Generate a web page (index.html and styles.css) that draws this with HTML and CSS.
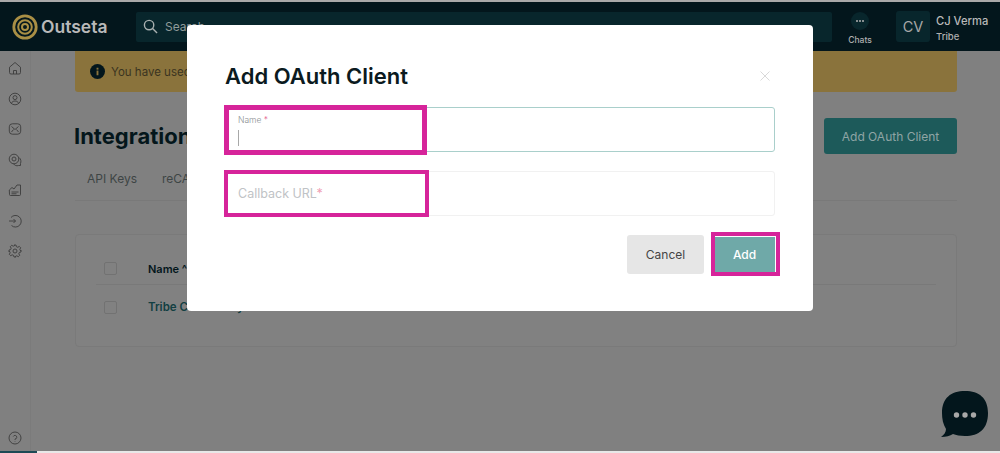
FILE: index.html
```html
<!DOCTYPE html>
<html lang="en">
<head>
<meta charset="utf-8">
<title>Add OAuth Client</title>
<link rel="stylesheet" href="styles.css">
</head>
<body>
<div class="top-edge"></div>
<header class="topbar">
  <div class="brand">
    <svg class="logo" viewBox="0 0 26 26" fill="none" stroke="#a98f45"><circle cx="13" cy="13" r="11.2" stroke-width="2.8"/><circle cx="13" cy="13" r="6.800" stroke-width="2"/><circle cx="13" cy="13" r="3" stroke-width="2"/></svg>
    <span class="brand-name">Outseta</span>
  </div>
  <div class="search">
    <svg class="search-icon" viewBox="0 0 16 16" fill="none" stroke="#a8b0b0" stroke-width="1.5"><circle cx="6.5" cy="6.5" r="5"/><path d="M10.2 10.2 15 15"/></svg>
    <span>Search</span>
  </div>
  <div class="chats">
    <span class="chats-dot"><svg viewBox="0 0 18 18" fill="#b0b0b0"><circle cx="6" cy="9" r="1"/><circle cx="9" cy="9" r="1"/><circle cx="12" cy="9" r="1"/></svg></span>
    <span class="chats-label">Chats</span>
  </div>
  <div class="avatar">CV</div>
  <div class="user">
    <span class="user-name">CJ Verma</span>
    <span class="user-org">Tribe</span>
  </div>
</header>
<div class="body-row">
  <nav class="sidebar">
    <svg class="nav-icon" viewBox="0 0 14 14"><path d="M1.5 6.2 7 1.5l5.5 4.7v5.300a1.500 1.500 0 0 1-1.500 1.500H3a1.500 1.500 0 0 1-1.500-1.500z"/><path d="M5.500 13V9.500h3V13"/></svg>
    <svg class="nav-icon" viewBox="0 0 14 14"><circle cx="7" cy="7" r="5.800"/><circle cx="7" cy="5.600" r="2"/><path d="M3.400 11.200c.8-1.600 2-2.200 3.600-2.200s2.800.6 3.600 2.200"/></svg>
    <svg class="nav-icon" viewBox="0 0 14 14"><rect x="1.300" y="1.800" width="11.400" height="10.400" rx="3"/><path d="m3.500 4.500 3.500 3 3.500-3M3.500 10l2-2.500M10.500 10l-2-2.500"/></svg>
    <svg class="nav-icon" viewBox="0 0 14 14"><circle cx="6" cy="6" r="4.800"/><circle cx="6" cy="6" r="2"/><path d="M11 4.500c2 1.500 2.300 4 1.500 6v2h-2c-2 .8-4-.2-5-1.700"/></svg>
    <svg class="nav-icon" viewBox="0 0 14 14"><path d="M1.300 7 4 4.500l2 1.500 3-4h3.500v9.500a1 1 0 0 1-1 1h-9a1 1 0 0 1-1-1z"/><path d="M3.500 9h7M3.500 10.800h5"/></svg>
    <svg class="nav-icon" viewBox="0 0 14 14"><path d="M3 3.500A5.800 5.800 0 1 1 3.500 11.500"/><path d="M1 7h6.500M5.500 5l2 2-2 2"/></svg>
    <svg class="nav-icon" viewBox="0 0 14 14"><circle cx="7" cy="7" r="2"/><path d="M6 1h2l.4 1.700 1.400.6 1.500-.9 1.400 1.400-.9 1.500.6 1.400L13 6v2l-1.600.4-.6 1.400.9 1.500-1.400 1.400-1.500-.9-1.400.6L8 13H6l-.4-1.600-1.400-.6-1.500.9-1.400-1.400.9-1.500-.6-1.400L1 8V6l1.600-.4.600-1.400-.9-1.500 1.400-1.400 1.500.9 1.400-.6z"/></svg>
    <svg class="nav-icon help" viewBox="0 0 14 14"><circle cx="7" cy="7" r="6"/><path d="M5.300 5.500A1.800 1.800 0 1 1 7 8v.8M7 10.300v.5"/></svg>
  </nav>
  <main class="content">
    <div class="banner">
      <svg class="info" viewBox="0 0 16 16"><circle cx="8" cy="8" r="8" fill="#03161c"/><rect x="7" y="7" width="2" height="5" fill="#8a733c"/><rect x="7" y="4" width="2" height="2" fill="#8a733c"/></svg>
      <span>You have used</span>
    </div>
    <div class="title-row">
      <h1>Integrations</h1>
      <button class="primary">Add OAuth Client</button>
    </div>
    <div class="tabs">
      <span>API Keys</span>
      <span>reCAPTCHA</span>
    </div>
    <section class="card">
      <div class="row head">
        <span class="check"></span>
        <span class="cell-name">Name ^</span>
      </div>
      <div class="row">
        <span class="check"></span>
        <span class="cell-link">Tribe Community</span>
      </div>
    </section>
  </main>
</div>
<div class="bottom-edge"><span class="bottom-teal"></span></div>

<div class="modal">
  <div class="modal-head">
    <h2>Add OAuth Client</h2>
    <svg class="close" viewBox="0 0 10 10" fill="none" stroke="#d9d9d9" stroke-width="1"><path d="m.5.500 9 9M9.500.500l-9 9"/></svg>
  </div>
  <div class="field focused">
    <span class="float-label">Name <em>*</em></span>
    <span class="caret"></span>
  </div>
  <div class="field">
    <span class="placeholder">Callback URL<em class="soft">*</em></span>
  </div>
  <div class="actions">
    <button class="cancel">Cancel</button>
    <button class="add">Add</button>
  </div>
  <div class="mark mark-name"></div>
  <div class="mark mark-url"></div>
  <div class="mark mark-add"></div>
</div>

<div class="chat-bubble">
  <svg viewBox="0 0 47 46"><path d="M24 0c14 0 23 7 23 22 0 16-9 23-23 23-5 0-9-1-12-2-3 2-7 3-12 3 3-2 5-5 5-8C2 33 1 28 1 22 1 7 10 0 24 0z" fill="#03161c"/><circle cx="15.500" cy="24" r="2.700" fill="#a8a8a8"/><circle cx="24" cy="24" r="2.700" fill="#a8a8a8"/><circle cx="32.500" cy="24" r="2.700" fill="#a8a8a8"/></svg>
</div>
</body>
</html>
```

FILE: styles.css
```css
* { box-sizing: border-box; }
html, body { margin: 0; height: 453px; overflow: hidden; }
body {
  width: 1000px;
  position: relative;
  display: flex;
  flex-direction: column;
  background: #808080;
  font-family: Inter, "Liberation Sans", sans-serif;
}
.top-edge { height: 2px; background: #a9a9a9; flex: none; }
.topbar {
  height: 49px;
  flex: none;
  display: flex;
  align-items: center;
  background: #03161c;
}
.brand { width: 136px; flex: none; display: flex; align-items: center; padding-left: 12px; gap: 3px; }
.logo { width: 26px; height: 26px; }
.brand-name { font-size: 17.500px; font-weight: 600; color: #b9b9b9; }
.search {
  width: 696px;
  height: 30px;
  flex: none;
  display: flex;
  align-items: center;
  gap: 7px;
  padding-left: 7px;
  background: #08262c;
  border-radius: 2px;
  font-size: 12px;
  color: #8f9a9a;
}
.search-icon { width: 15px; height: 15px; }
.chats { width: 56px; margin-right: 8px; padding-top: 4px; flex: none; display: flex; flex-direction: column; align-items: center; gap: 5px; }
.chats-dot {
  width: 18px;
  height: 18px;
  border-radius: 50%;
  background: #08262c;
}
.chats-dot svg { display: block; width: 18px; height: 18px; }
.chats-label { font-size: 8.500px; font-weight: 500; color: #b0b0b0; }
.avatar {
  width: 34px;
  height: 31px;
  flex: none;
  display: flex;
  align-items: center;
  justify-content: center;
  background: #08262c;
  border-radius: 3px;
  font-size: 14.500px;
  color: #a8a8a8;
}
.user { margin-left: 6px; padding-top: 2px; display: flex; flex-direction: column; gap: 3px; white-space: nowrap; }
.user-name { font-size: 11.200px; font-weight: 500; color: #b9b9b9; }
.user-org { font-size: 9.500px; font-weight: 500; color: #b0b0b0; }

.body-row { flex: 1; display: flex; min-height: 0; }
.sidebar {
  width: 31px;
  flex: none;
  display: flex;
  flex-direction: column;
  align-items: center;
  gap: 16.500px;
  padding: 10px 0 6px 0;
  border-right: 1px solid #7b7b7b;
}
.nav-icon { width: 14px; height: 14px; fill: none; stroke: #3c3c3c; stroke-width: .9; flex: none; }
.help { margin-top: auto; }

.content { flex: 1; padding: 0 43px 0 44px; min-width: 0; }
.banner {
  height: 41px;
  display: flex;
  align-items: center;
  gap: 6px;
  padding-left: 15px;
  background: #8a733c;
  border-radius: 0 0 3px 3px;
  font-size: 11.500px;
  color: #3a3320;
}
.info { width: 15px; height: 15px; }
.title-row {
  display: flex;
  align-items: center;
  justify-content: space-between;
  margin-top: 26px;
  height: 36px;
}
h1 { margin: 0 0 0 -1px; font-size: 22px; font-weight: 700; color: #04161b; }
.primary {
  width: 133px;
  height: 36px;
  border: 0;
  border-radius: 3px;
  background: #1d5a5a;
  color: #8fa5a5;
  font: 400 12px Inter, "Liberation Sans", sans-serif;
}
.tabs {
  height: 47px;
  display: flex;
  align-items: center;
  gap: 25px;
  padding: 3px 0 0 12px;
  border-bottom: 1px solid #797979;
  font-size: 12px;
  color: #3e4545;
}
.card {
  margin-top: 33px;
  height: 113px;
  padding: 18px 20px 0;
  background: #818181;
  border: 1px solid #7a7a7a;
  border-radius: 4px;
}
.row { height: 32px; display: flex; align-items: center; padding-left: 8px; gap: 31px; font-size: 11px; }
.row.head { border-bottom: 1px solid #797979; }
.row + .row { margin-top: 7px; height: 30px; }
.check { width: 13px; height: 13px; border: 1px solid #727272; border-radius: 2px; }
.cell-name { font-weight: 600; color: #04161b; }
.cell-link { font-weight: 600; font-size: 11.500px; color: #123f42; }

.bottom-edge { height: 2px; flex: none; background: #e8e8e8; }
.bottom-teal { display: block; width: 37px; height: 2px; background: #1d4a55; }

.modal {
  position: absolute;
  left: 187px;
  top: 25px;
  width: 626px;
  height: 286px;
  padding: 36px 38px 0 38px;
  background: #fff;
  border-radius: 4px;
}
.modal-head { height: 46px; display: flex; justify-content: space-between; padding-right: 5px; }
h2 { margin: 0; font-size: 22px; line-height: 31px; font-weight: 600; color: #0b1a20; }
.close { width: 10px; height: 10px; margin-top: 10px; }
.field {
  position: relative;
  height: 45px;
  margin-bottom: 19px;
  border: 1px solid #f1f1f1;
  border-radius: 3px;
}
.field.focused { border-color: #a9cfcb; }
.float-label { position: absolute; left: 12px; top: 7px; font-size: 8.500px; font-weight: 300; color: #8a8f92; }
em { font-style: normal; color: #e0457b; }
em.soft { color: #f0a0b4; }
.caret { position: absolute; left: 12px; top: 22px; width: 1px; height: 16px; background: #a8a8a8; }
.placeholder { position: absolute; left: 12px; top: 14px; font-size: 12.500px; color: #bfc3c6; }
.actions { display: flex; justify-content: flex-end; align-items: center; gap: 10px; }
.cancel {
  width: 77px;
  height: 39px;
  border: 0;
  border-radius: 3px;
  background: #e6e6e6;
  color: #444;
  font: 400 12px Inter, "Liberation Sans", sans-serif;
}
.add {
  width: 61px;
  height: 36px;
  border: 0;
  background: #6fa9a8;
  color: #fff;
  font: 500 12px Inter, "Liberation Sans", sans-serif;
}
.mark { position: absolute; border: 4px solid #d6249a; }
.mark-name { left: 37px; top: 80px; width: 203px; height: 50px; border-width: 5px; }
.mark-url { left: 37px; top: 145px; width: 205px; height: 47px; }
.mark-add { left: 524px; top: 207px; width: 69px; height: 44px; }

.chat-bubble { position: absolute; left: 941px; top: 391px; width: 47px; height: 46px; }
.chat-bubble svg { display: block; width: 47px; height: 46px; }
```
